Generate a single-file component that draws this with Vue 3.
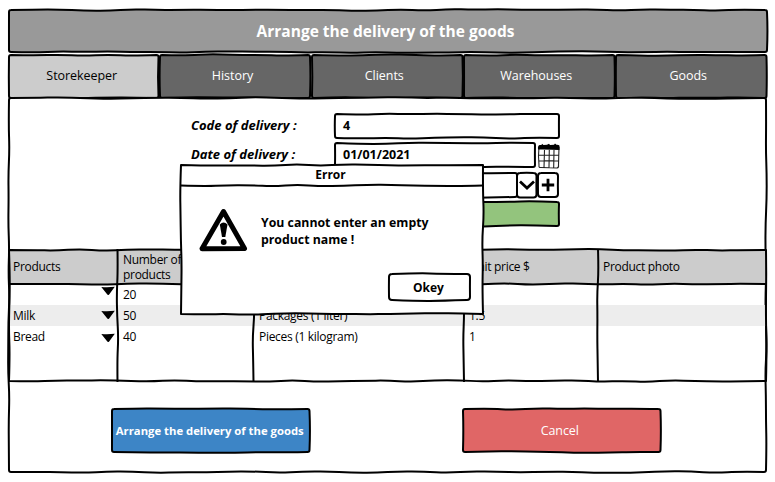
<script setup>
import { h } from 'vue'

// Small deterministic generator, so the hand-drawn strokes are stable between renders.
function random(seed) {
  let s = seed * 7919 + 17
  return () => {
    s = (s * 16807) % 2147483647
    return s / 2147483647 - 0.5
  }
}

function strokeTo(x1, y1, x2, y2, rnd) {
  const length = Math.hypot(x2 - x1, y2 - y1)
  const n = Math.max(2, Math.round(length / 24))
  const amp = length < 30 ? 0.9 : 1.9
  const nx = (y2 - y1) / length
  const ny = (x2 - x1) / length
  const pts = []
  for (let i = 1; i < n; i++) {
    const o = rnd() * amp
    pts.push([x1 + ((x2 - x1) * i) / n + nx * o, y1 + ((y2 - y1) * i) / n + ny * o])
  }
  pts.push([x2, y2])
  let d = ''
  for (let i = 0; i < pts.length - 1; i++) {
    const [x, y] = pts[i]
    const [u, v] = pts[i + 1]
    const last = i === pts.length - 2
    d += `Q${x} ${y} ${last ? u : (x + u) / 2} ${last ? v : (y + v) / 2}`
  }
  return d
}

function boxPath(w, hgt, r, seed) {
  const k = random(seed)
  return (
    `M${r} 0` + strokeTo(r, 0, w - r, 0, k) + `Q${w} 0 ${w} ${r}` +
    strokeTo(w, r, w, hgt - r, k) + `Q${w} ${hgt} ${w - r} ${hgt}` +
    strokeTo(w - r, hgt, r, hgt, k) + `Q0 ${hgt} 0 ${hgt - r}` +
    strokeTo(0, hgt - r, 0, r, k) + `Q0 0 ${r} 0Z`
  )
}

function linePath([x1, y1, x2, y2], seed) {
  return `M${x1} ${y1}` + strokeTo(x1, y1, x2, y2, random(seed))
}

const Sketch = (props) =>
  h('svg', { class: 'sketch', width: props.w, height: props.h, 'aria-hidden': 'true' }, [
    h('path', { d: boxPath(props.w, props.h, props.r ?? 2, props.seed) }),
    ...(props.lines ?? []).map((l, i) => h('path', { d: linePath(l, props.seed + i + 1), fill: 'none' })),
  ])
Sketch.props = ['w', 'h', 'r', 'seed', 'lines']

const tabs = [
  { name: 'Storekeeper', w: 149.5, active: true },
  { name: 'History', w: 150 },
  { name: 'Clients', w: 150.5 },
  { name: 'Warehouses', w: 150.5 },
  { name: 'Goods', w: 150.5 },
]
const columns = ['Products', 'Number of products', 'Unit', 'Unit price $', 'Product photo']
const rows = [
  ['', '20', '', '', ''],
  ['Milk', '50', 'Packages (1 liter)', '1.5', ''],
  ['Bread', '40', 'Pieces (1 kilogram)', '1', ''],
]
const tableLines = [
  [0, 34, 757, 34],
  [108.5, -1, 108.5, 132],
  [244.5, -1, 244.5, 132],
  [455, -1, 455, 132],
  [589, -1, 589, 132],
]
</script>

<template>
  <main class="screen">
    <header class="title">
      <Sketch :w="758" :h="42" :seed="3" />
      <h1>Arrange the delivery of the goods</h1>
    </header>

    <nav class="tabs">
      <a v-for="(t, i) in tabs" :key="t.name" class="tab" :class="{ active: t.active }" :style="{ width: t.w + 'px' }">
        <Sketch :w="t.w" :h="43" :seed="11 + i" />
        <span>{{ t.name }}</span>
      </a>
    </nav>

    <section class="body">
      <Sketch :w="757" :h="374" :seed="23" />
      <form class="form" @submit.prevent>
        <label class="code">Code of delivery :</label>
        <div class="field wide"><Sketch :w="224" :h="24" :seed="31" /><span>4</span></div>
        <label>Date of delivery :</label>
        <div class="line">
          <div class="field date"><Sketch :w="200" :h="24" :seed="32" /><span>01/01/2021</span></div>
          <svg class="calendar" width="24" height="26" viewBox="0 0 24 26">
            <path class="thin" d="M2 4Q1 13 2 22Q1.500 25 4 24.500L20 25Q22 24.500 21.500 22L22 4M2 12L22 12.300M2 18Q12 17.300 22 18M7.500 7L7 24.500M12.300 7L12 24.500M17 7L16.700 24.500" />
            <path d="M1 6.500Q0.500 2 3 2L4.500 2L5 0.700L6.500 2L10 1.700L12 .8L13 2L17 1.700L18 .5L19.500 1.800Q23 1.500 22.500 4L22.500 7Q12 6.300 1 6.500Z" />
          </svg>
        </div>
        <label></label>
        <div class="line combo">
          <div class="field pick"><Sketch :w="182" :h="24" :seed="33" /></div>
          <div class="square">
            <Sketch :w="19.500" :h="24.500" :r="3" :seed="34" />
            <svg class="mark" width="16" height="10" viewBox="0 0 16 10"><path d="M1 1.500L8 8L15 1.500" /></svg>
          </div>
          <div class="square plus">
            <Sketch :w="20" :h="24" :r="3" :seed="37" />
            <svg class="mark" width="14" height="14" viewBox="0 0 14 14"><path d="M7 .8V13.200M.8 7H13.200" /></svg>
          </div>
        </div>
        <label></label>
        <div class="field wide green"><Sketch :w="224" :h="24" :seed="36" /></div>
      </form>

      <div class="table">
        <Sketch class="frame" :w="757" :h="131" :r="0" :seed="41" :lines="tableLines" />
        <div class="row head">
          <div v-for="c in columns" :key="c" class="cell">{{ c }}</div>
        </div>
        <div v-for="(r, i) in rows" :key="i" class="row" :class="{ striped: i === 1 }">
          <div v-for="(c, j) in r" :key="j" class="cell">
            <span>{{ c }}</span>
            <svg v-if="j === 0" class="arrow" :class="'arrow-' + i" width="14" height="10" viewBox="0 0 14 10">
              <path d="M.3 1Q7 1.500 13.800 .8L7.800 9L6.500 8.800Z" />
            </svg>
          </div>
        </div>
      </div>

      <footer class="actions">
        <button class="btn blue"><Sketch :w="197.500" :h="43" :seed="51" /><span>Arrange the delivery of the goods</span></button>
        <button class="btn red"><Sketch :w="197.500" :h="43" :seed="52" /><span>Cancel</span></button>
      </footer>
    </section>

    <div class="dialog" role="alertdialog">
      <Sketch :w="302" :h="149" :r="0" :seed="61" :lines="[[0, 20.5, 302, 20.5]]" />
      <div class="dialog-title">Error</div>
      <div class="dialog-body">
        <svg class="warning" width="49" height="44" viewBox="0 0 49 44">
          <path class="tri" d="M24.500 3.500L45.500 40.500L3 40.700Z" />
          <path d="M20.800 16.500Q24.500 12.500 28.500 16.500L26.300 29H23Z" />
          <circle cx="24.700" cy="34" r="2.900" />
        </svg>
        <p>You cannot enter an empty<br />product name !</p>
      </div>
      <button class="ok"><Sketch :w="81" :h="26" :r="3" :seed="65" /><span>Okey</span></button>
    </div>
  </main>
</template>

<style>
body {
  margin: 0;
  background: #fff;
}
</style>

<style scoped>
.screen {
  position: relative;
  box-sizing: border-box;
  width: 775px;
  height: 482px;
  padding: 10px 8px 0 9px;
  overflow: hidden;
  font-family: "Open Sans", "Noto Sans", sans-serif;
  font-size: 12px;
  color: #000;
}
.sketch {
  position: absolute;
  left: 0;
  top: 0;
  overflow: visible;
  fill: #fff;
  stroke: #000;
  stroke-width: 2;
  stroke-linejoin: round;
}
.sketch ~ * {
  position: relative;
}
.title {
  position: relative;
  display: flex;
  align-items: center;
  justify-content: center;
  width: 753px;
  height: 42px;
  padding-right: 5px;
}
.title .sketch {
  fill: #999;
}
h1 {
  margin: 0;
  font-size: 15.5px;
  font-weight: 700;
  color: #fff;
}
.tabs {
  display: flex;
  gap: 1.5px;
  margin: 2.5px 0 0 0;
}
.tab {
  position: relative;
  display: flex;
  align-items: center;
  justify-content: center;
  box-sizing: border-box;
  height: 43px;
  padding-right: 5px;
  padding-bottom: 1px;
  font-size: 12.5px;
  letter-spacing: -0.05px;
  color: #fff;
}
.tab .sketch {
  fill: #666;
}
.tab.active {
  padding-right: 4px;
  color: #000;
}
.tab.active .sketch {
  fill: #ccc;
}
.body {
  position: relative;
  height: 374px;
}
.form {
  display: grid;
  grid-template-columns: 144px 226px;
  grid-auto-rows: 24px;
  row-gap: 5.5px;
  height: 136px;
  padding: 16px 0 0 182px;
  font-weight: 700;
}
.form label {
  font-size: 13px;
  font-style: italic;
  line-height: 22px;
}
.line {
  display: flex;
}
.field {
  position: relative;
  height: 24px;
  font-size: 12.5px;
  line-height: 23px;
}
.field span {
  margin-left: 8px;
}
.wide {
  width: 224px;
}
.date {
  width: 200px;
}
.pick {
  width: 182px;
}
.calendar {
  margin-left: 2px;
}
.thin {
  fill: none;
  stroke: #222;
  stroke-width: 1.1;
}
.square {
  position: relative;
  display: flex;
  align-items: center;
  justify-content: center;
  width: 19.5px;
  height: 24px;
}
.plus {
  margin-left: 1.5px;
  width: 20px;
}
.mark {
  fill: none;
  stroke: #000;
  stroke-width: 2.8;
}
.green .sketch {
  fill: #93c47d;
}
.table {
  position: relative;
  width: 757px;
  height: 131px;
  letter-spacing: -0.3px;
}
.row {
  position: relative;
  display: grid;
  grid-template-columns: 110px 136px 210px 134px 167px;
  height: 21px;
  line-height: 21px;
}
.row.head {
  height: 34px;
  align-items: center;
  line-height: 15px;
  background: #ccc;
}
.table .frame {
  z-index: 1;
  fill: none;
}
.striped {
  background: #ededed;
}
.cell {
  display: flex;
  justify-content: space-between;
  align-items: center;
  padding-left: 4px;
}
.head .cell {
  padding-right: 50px;
}
.arrow {
  margin-right: 4px;
}
.arrow-0 {
  margin-bottom: 7px;
}
.arrow-2 {
  margin-top: 3px;
}
.actions {
  display: flex;
  gap: 153.5px;
  padding: 28px 0 0 103px;
}
button {
  padding: 0;
  border: 0;
  background: none;
  font: inherit;
}
.btn {
  position: relative;
  width: 197.5px;
  height: 43px;
  color: #fff;
}
.blue {
  padding-right: 2px;
  font-size: 11.3px;
  font-weight: 700;
}
.red {
  padding-right: 4px;
  font-size: 12.5px;
  letter-spacing: -0.1px;
}
.blue .sketch {
  fill: #3d85c6;
}
.red .sketch {
  fill: #e06666;
}
.dialog {
  position: absolute;
  z-index: 2;
  left: 180.5px;
  top: 165px;
  width: 302px;
  height: 149px;
  font-weight: 700;
}
.dialog-title {
  height: 20px;
  padding-right: 2px;
  line-height: 20px;
  text-align: center;
}
.dialog-body {
  display: flex;
  gap: 13.5px;
  padding: 23px 0 0 18px;
}
.dialog-body p {
  margin: 6px 0 0;
  font-size: 12.3px;
  line-height: 17px;
}
.tri {
  fill: none;
  stroke: #000;
  stroke-width: 5;
  stroke-linejoin: round;
}
.ok {
  position: relative;
  display: block;
  width: 81px;
  height: 26px;
  margin: 22px 0 0 208.5px;
  padding-right: 2px;
  font-size: 12px;
}
</style>
